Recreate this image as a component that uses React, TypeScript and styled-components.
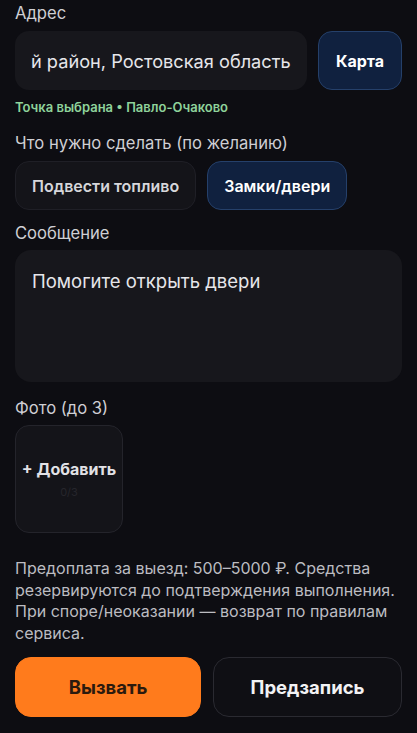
import React from 'react';
import styled, { createGlobalStyle } from 'styled-components';

const GlobalStyle = createGlobalStyle`
  html, body {
    margin: 0;
    padding: 0;
    background: #0d0d12;
  }
  body {
    font-family: Inter, "Noto Sans", sans-serif;
    -webkit-font-smoothing: antialiased;
  }
`;

const Page = styled.div`
  width: 417px;
  height: 733px;
  box-sizing: border-box;
  padding: 3px 15px 0;
  background: #0d0d12;
  overflow: hidden;
`;

const Label = styled.div<{ $top?: number }>`
  font-size: 16.6px;
  line-height: 20px;
  color: #cfcfd4;
  margin-top: ${p => p.$top ?? 0}px;
`;

const AddressRow = styled.div`
  display: flex;
  gap: 11px;
  margin-top: 8px;
`;

const AddressField = styled.div`
  flex: 1;
  height: 59px;
  box-sizing: border-box;
  display: flex;
  align-items: center;
  padding: 0 16px;
  background: #17171c;
  border-radius: 14px;
  font-size: 18.2px;
  color: #e6e6ea;
  white-space: nowrap;
  overflow: hidden;
`;

const MapButton = styled.button`
  width: 84px;
  height: 59px;
  border-radius: 14px;
  background: #10213f;
  border: 1px solid #25406a;
  color: #ffffff;
  font-family: inherit;
  font-size: 16px;
  font-weight: 700;
`;

const PickedNote = styled.div`
  margin-top: 8px;
  font-size: 13px;
  line-height: 18px;
  font-weight: 600;
  color: #8fd39b;
`;

const ChipRow = styled.div`
  display: flex;
  gap: 11px;
  margin-top: 8px;
`;

const Chip = styled.button<{ $active?: boolean }>`
  height: 49px;
  padding: 0 16px;
  border-radius: 14px;
  font-family: inherit;
  font-size: 16px;
  font-weight: 600;
  color: ${p => (p.$active ? '#ffffff' : '#d6d6da')};
  background: ${p => (p.$active ? '#10213f' : '#141419')};
  border: 1px solid ${p => (p.$active ? '#25406a' : '#1f1f26')};
`;

const MessageBox = styled.div`
  margin-top: 7px;
  height: 132px;
  box-sizing: border-box;
  padding: 19px 17px;
  background: #17171c;
  border-radius: 16px;
  font-size: 18.5px;
  line-height: 24px;
  color: #e6e6ea;
`;

const PhotoTile = styled.div`
  margin-top: 7px;
  width: 108px;
  height: 108px;
  box-sizing: border-box;
  border-radius: 14px;
  background: #141419;
  border: 1px solid #24242b;
  display: flex;
  flex-direction: column;
  align-items: center;
  justify-content: center;
`;

const AddText = styled.div`
  font-size: 16px;
  font-weight: 700;
  color: #e2e2e6;
`;

const Counter = styled.div`
  font-size: 11px;
  color: #26262c;
  margin-top: 6px;
`;

const Notice = styled.div`
  margin-top: 25px;
  font-size: 16px;
  line-height: 21.7px;
  color: #bcbcc1;
`;

const ActionRow = styled.div`
  display: flex;
  gap: 12px;
  margin-top: 12px;
`;

const ActionButton = styled.button<{ $primary?: boolean }>`
  flex: ${p => (p.$primary ? '186' : '189')} 1 0;
  height: 60px;
  border-radius: 16px;
  font-family: inherit;
  font-size: 18.5px;
  font-weight: 700;
  color: ${p => (p.$primary ? '#2b1a0e' : '#f2f2f4')};
  background: ${p => (p.$primary ? '#ff7b1c' : '#0f0f14')};
  border: 1px solid ${p => (p.$primary ? '#ff7b1c' : '#2a2a31')};
`;

export default function App() {
  return (
    <>
      <GlobalStyle />
      <Page>
        <Label>Адрес</Label>
        <AddressRow>
          <AddressField>й район, Ростовская область</AddressField>
          <MapButton>Карта</MapButton>
        </AddressRow>
        <PickedNote>Точка выбрана • Павло-Очаково</PickedNote>

        <Label $top={17}>Что нужно сделать (по желанию)</Label>
        <ChipRow>
          <Chip>Подвести топливо</Chip>
          <Chip $active>Замки/двери</Chip>
        </ChipRow>

        <Label $top={13}>Сообщение</Label>
        <MessageBox>Помогите открыть двери</MessageBox>

        <Label $top={16}>Фото (до 3)</Label>
        <PhotoTile>
          <AddText>+ Добавить</AddText>
          <Counter>0/3</Counter>
        </PhotoTile>

        <Notice>
          Предоплата за выезд: 500–5000 ₽. Средства резервируются до подтверждения выполнения.
          При споре/неоказании — возврат по правилам сервиса.
        </Notice>

        <ActionRow>
          <ActionButton $primary>Вызвать</ActionButton>
          <ActionButton>Предзапись</ActionButton>
        </ActionRow>
      </Page>
    </>
  );
}
